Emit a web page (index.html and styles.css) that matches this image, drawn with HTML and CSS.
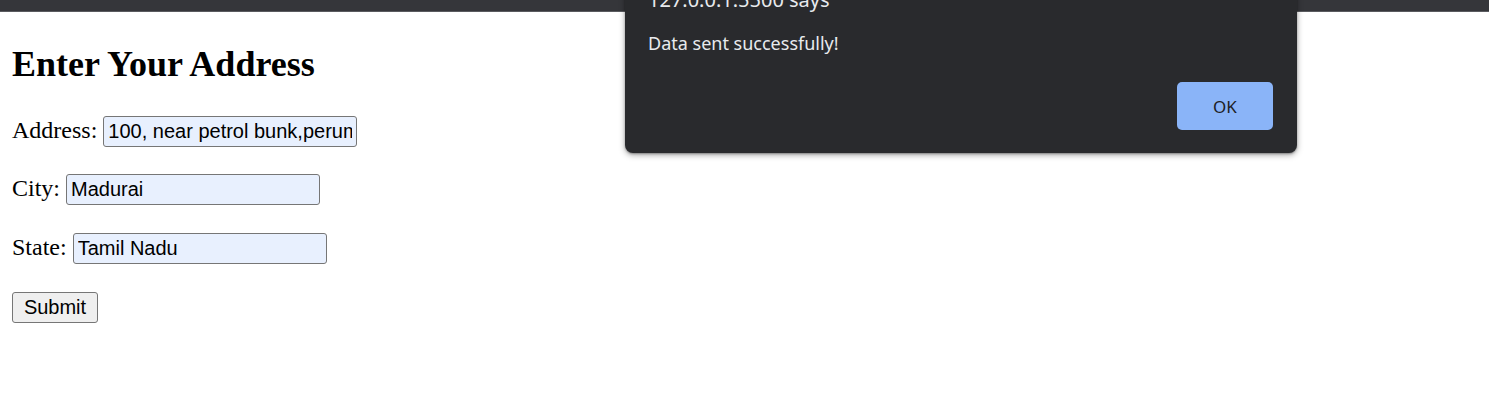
FILE: index.html
```html
<!DOCTYPE html>
<html lang="en">
<head>
<meta charset="utf-8">
<title>Address Form</title>
<link rel="stylesheet" href="styles.css">
</head>
<body>
<div class="topbar"></div>
<main class="page">
  <h1 class="title">Enter Your Address</h1>
  <form class="form">
    <div class="row"><label class="label" for="address">Address:</label><input class="field" id="address" type="text" value="100, near petrol bunk,perumalpuram"></div>
    <div class="row"><label class="label" for="city">City:</label><input class="field" id="city" type="text" value="Madurai"></div>
    <div class="row"><label class="label" for="state">State:</label><input class="field" id="state" type="text" value="Tamil Nadu"></div>
    <div class="row"><button class="submit" type="button">Submit</button></div>
  </form>
</main>
<div class="dialog" role="alertdialog">
  <div class="dialog-title">127.0.0.1:5500 says</div>
  <div class="dialog-message">Data sent successfully!</div>
  <div class="dialog-actions"><button class="ok" type="button">OK</button></div>
</div>
</body>
</html>
```

FILE: styles.css
```css
html, body {
  margin: 0;
  padding: 0;
  background: #ffffff;
}

body {
  font-family: "Liberation Serif", "Times New Roman", serif;
  color: #000000;
  position: relative;
  min-height: 408px;
  overflow: hidden;
}

.topbar {
  height: 11px;
  background: #35363a;
  border-bottom: 1px solid #5a5b5f;
}

.page {
  padding: 0 12px;
}

.title {
  margin: 31.7px 0 0 0;
  font-family: "Liberation Serif", "Times New Roman", serif;
  font-size: 36px;
  font-weight: bold;
  line-height: 40px;
}

.form {
  margin-top: 32px;
  display: flex;
  flex-direction: column;
  gap: 27.7px;
}

.row {
  display: flex;
  align-items: baseline;
  gap: 6px;
}

.label {
  font-family: "Liberation Serif", "Times New Roman", serif;
  font-size: 24px;
}

.field {
  box-sizing: border-box;
  width: 254px;
  height: 31px;
  margin: 0;
  padding: 0 4px;
  font-family: "Liberation Sans", Arial, sans-serif;
  font-size: 20px;
  color: #000000;
  background: #e8f0fe;
  border: 1px solid #767676;
  border-radius: 3px;
  outline: none;
}

.submit {
  box-sizing: border-box;
  width: 86px;
  height: 31px;
  margin: 0;
  padding: 0 10px;
  font-family: "Liberation Sans", Arial, sans-serif;
  font-size: 20px;
  color: #000000;
  background: #efefef;
  border: 1px solid #767676;
  border-radius: 3px;
}

.dialog {
  position: absolute;
  left: 625px;
  top: -12px;
  width: 672px;
  box-sizing: border-box;
  padding: 0 24px 23px 23px;
  background: #292a2d;
  border-radius: 0 0 8px 8px;
  box-shadow: 0 2px 6px rgba(0, 0, 0, 0.35), 0 1px 2px rgba(0, 0, 0, 0.3);
  font-family: "Noto Sans", "Open Sans", sans-serif;
  color: #e8eaed;
}

.dialog-title {
  font-size: 20px;
  line-height: 24px;
}

.dialog-message {
  margin-top: 19px;
  font-size: 18px;
  line-height: 24px;
}

.dialog-actions {
  margin-top: 27px;
  display: flex;
  justify-content: flex-end;
}

.ok {
  width: 96px;
  height: 48px;
  margin: 0;
  padding: 0;
  border: none;
  border-radius: 5px;
  background: #8ab4f8;
  color: #202124;
  font-family: "Noto Sans", "Open Sans", sans-serif;
  font-size: 17px;
}
```
